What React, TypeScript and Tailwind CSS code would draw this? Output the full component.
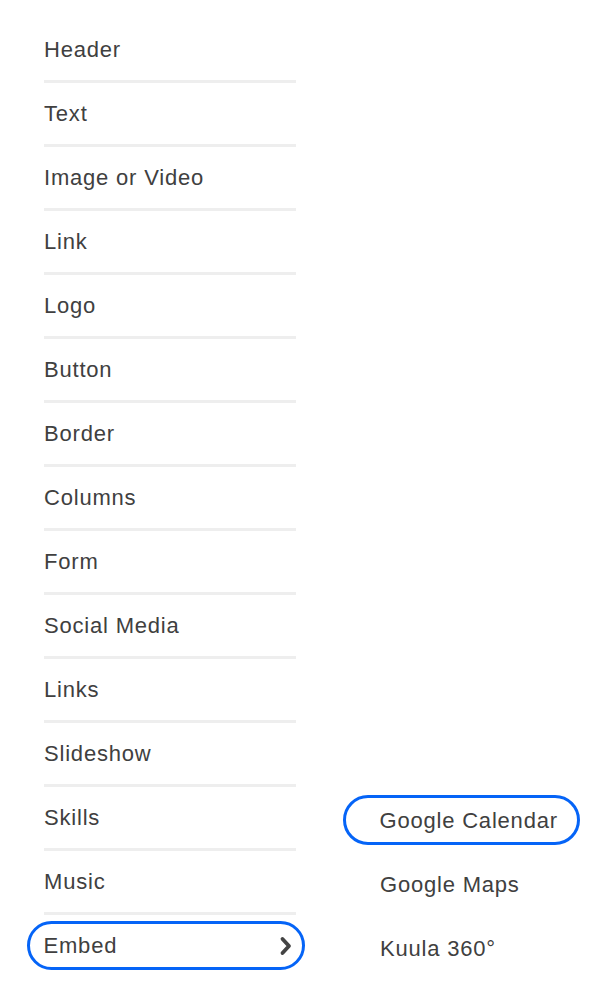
import React from 'react';

const items = [
  'Header',
  'Text',
  'Image or Video',
  'Link',
  'Logo',
  'Button',
  'Border',
  'Columns',
  'Form',
  'Social Media',
  'Links',
  'Slideshow',
  'Skills',
  'Music',
];

const subItems = ['Google Calendar', 'Google Maps', 'Kuula 360°'];

const font = { fontFamily: '"Liberation Sans", Arial, sans-serif' };

function Chevron() {
  return (
    <svg width="14" height="20" viewBox="0 0 14 20" fill="none">
      <path d="M3.5 3l6.5 7-6.5 7" stroke="#444444" strokeWidth="3.8" strokeLinecap="round" strokeLinejoin="round" />
    </svg>
  );
}

export default function App() {
  return (
    <div className="w-[593px] h-[994px] bg-white flex text-[#404040]" style={font}>
      <div className="w-[252px] shrink-0 ml-[44px] pt-[19px] flex flex-col">
        {items.map((label) => (
          <div key={label} className="flex flex-col">
            <div className="h-[61px] flex items-center text-[22px] tracking-[0.8px]">{label}</div>
            <div className="h-[3px] bg-[#eeeeee]" />
          </div>
        ))}
        <div className="h-[61px] flex items-center">
          <div className="-ml-[17px] shrink-0 w-[278px] h-[49px] rounded-full border-[3.5px] border-[#0564f7] flex items-center justify-between pl-[13.5px] pr-[9px]">
            <span className="text-[22px] tracking-[0.8px]">Embed</span>
            <Chevron />
          </div>
        </div>
      </div>

      <div className="ml-[47px] pt-[788px] flex flex-col">
        {subItems.map((label, i) => (
          <div key={label} className="h-[64px] flex items-center">
            {i === 0 ? (
              <div className="shrink-0 w-[237px] h-[50px] rounded-full border-[3.5px] border-[#0564f7] flex items-center pl-[33.5px]">
                <span className="text-[22px] tracking-[0.8px]">{label}</span>
              </div>
            ) : (
              <span className="pl-[37px] text-[22px] tracking-[0.8px]">{label}</span>
            )}
          </div>
        ))}
      </div>
    </div>
  );
}
